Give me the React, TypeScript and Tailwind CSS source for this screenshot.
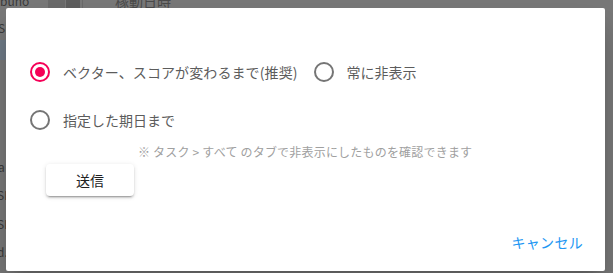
import React from 'react';

const font = { fontFamily: '"Noto Sans CJK JP", "Noto Sans", sans-serif' };

function Radio({ checked }: { checked?: boolean }) {
  return (
    <span
      className={`flex h-5 w-5 shrink-0 items-center justify-center rounded-full border-2 ${
        checked ? 'border-[#f50057]' : 'border-[#757575]'
      }`}
    >
      {checked && <span className="h-[10px] w-[10px] rounded-full bg-[#f50057]" />}
    </span>
  );
}

export default function App() {
  return (
    <div className="relative h-[273px] w-[613px] overflow-hidden bg-[#787878]" style={font}>
      {/* dimmed page behind */}
      <div className="absolute left-[48px] top-0 h-[8px] w-[17px] bg-[#6a6a6a]" />
      <div className="absolute left-[66px] top-0 h-[8px] w-[14px] bg-[#5e5e5e]" />
      <div className="absolute left-[82px] top-0 h-[8px] w-px bg-[#6a6a6a]" />
      <div className="absolute left-[115px] top-[-9px] text-[14px] text-[#4a4a4a]">稼動日時</div>
      <div className="absolute left-0 top-[-8px] text-[12px] text-[#3a3a3a]">buno</div>
      <div className="absolute left-0 top-[40px] h-[20px] w-[6px] bg-[#6e7a86]" />
      <div className="absolute left-[-2px] top-[19px] text-[12px] text-[#3a3a3a]">SL</div>
      <div className="absolute left-[-2px] top-[158px] text-[12px] text-[#3a3a3a]">a</div>
      <div className="absolute left-[-3px] top-[186px] text-[12px] text-[#3a3a3a]">SL</div>
      <div className="absolute left-[-3px] top-[215px] text-[12px] text-[#3a3a3a]">SL</div>
      <div className="absolute left-[-3px] top-[243px] text-[12px] text-[#3a3a3a]">d.</div>

      {/* dialog */}
      <div className="absolute left-[6px] top-[8px] flex h-[263px] w-[599px] flex-col rounded-[2px] bg-white pl-6 pt-[52px] shadow-[0_11px_15px_-7px_rgba(0,0,0,0.2),0_24px_38px_3px_rgba(0,0,0,0.14)]">
        <div className="flex h-6 items-center">
          <Radio checked />
          <span className="ml-[13px] text-[14px] tracking-[0.1px] text-[#5c5c5c]">ベクター、スコアが変わるまで(推奨)</span>
          <span className="ml-[16px] flex items-center">
            <Radio />
            <span className="ml-[13px] text-[14px] text-[#5c5c5c]">常に非表示</span>
          </span>
        </div>
        <div className="mt-6 flex h-6 items-center">
          <Radio />
          <span className="ml-[13px] text-[14px] text-[#5c5c5c]">指定した期日まで</span>
        </div>
        <div className="ml-[108px] mt-3 h-4 text-[12px] leading-4 tracking-[0.2px] text-[#a0a0a0]">
          ※ タスク &gt; すべて のタブで非表示にしたものを確認できます
        </div>
        <div className="ml-4 mt-1">
          <button className="h-8 w-[88px] rounded-[4px] bg-white text-[14px] text-[#212121] shadow-[0_3px_1px_-2px_rgba(0,0,0,0.2),0_2px_2px_0_rgba(0,0,0,0.14),0_1px_5px_0_rgba(0,0,0,0.12)]">
            送信
          </button>
        </div>
        <div className="mt-auto flex justify-end pb-[18px] pr-[22px]">
          <button className="text-[14px] tracking-[0.3px] text-[#2196f3]">キャンセル</button>
        </div>
      </div>
    </div>
  );
}
